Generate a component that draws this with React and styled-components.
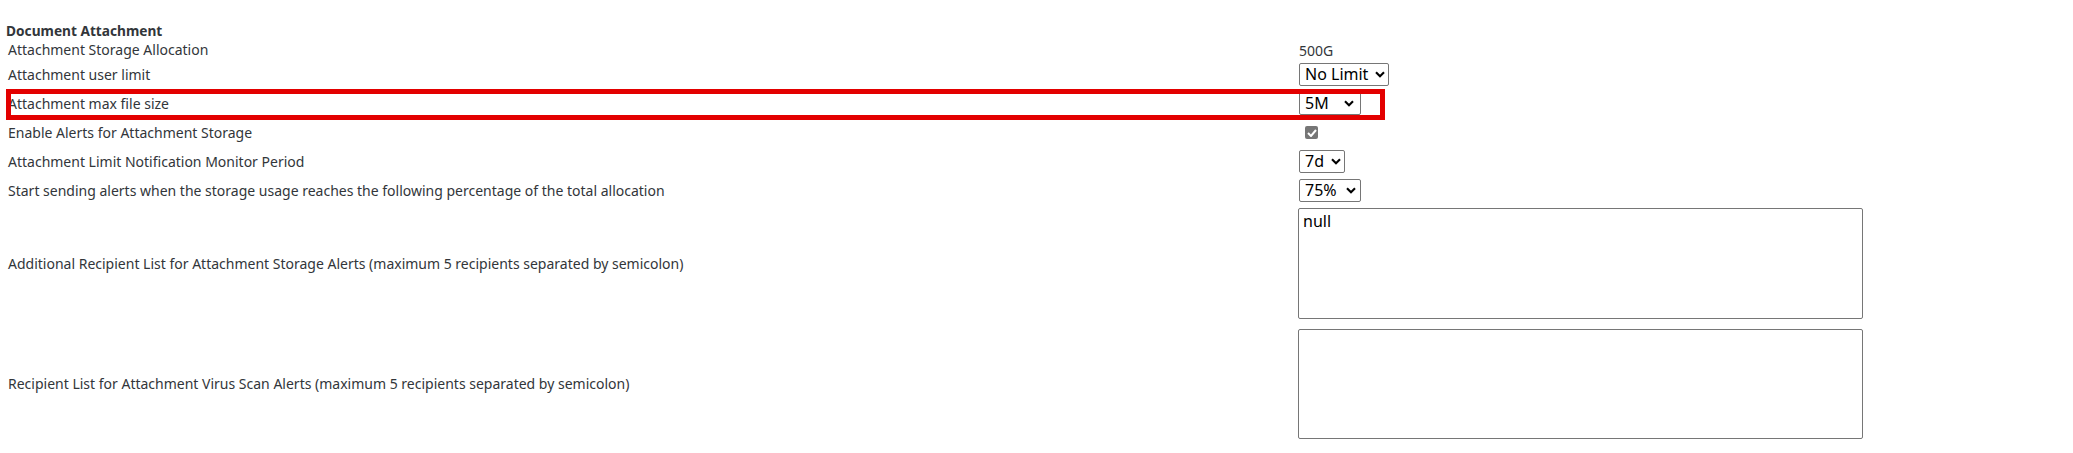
import React from 'react';
import styled, { createGlobalStyle } from 'styled-components';

const GlobalStyle = createGlobalStyle`
  html, body {
    margin: 0;
    padding: 0;
    background: #ffffff;
  }
  body {
    font-family: "Noto Sans", "Liberation Sans", sans-serif;
    color: #32363a;
  }
`;

const Page = styled.div`
  padding: 22px 0 0 8px;
  width: 2073px;
  height: 453px;
  box-sizing: border-box;
`;

const Heading = styled.div`
  margin-left: -2px;
  font-size: 13.7px;
  font-weight: 700;
  line-height: 18px;
  height: 18px;
`;

const Grid = styled.div`
  display: grid;
  grid-template-columns: 1291px auto;
  align-items: center;
`;

const Label = styled.div`
  font-size: 14px;
  line-height: 20px;
  white-space: nowrap;
  margin-top: ${(p) => p.gap || 0}px;
`;

const Value = styled.div`
  position: relative;
  display: flex;
  align-items: center;
  height: ${(p) => p.h || 23}px;
  margin-top: ${(p) => p.gap || 0}px;
  font-size: 14px;
`;

const SelectBox = styled.div`
  display: flex;
  align-items: center;
  justify-content: space-between;
  box-sizing: border-box;
  width: ${(p) => p.w}px;
  height: 23px;
  padding: 0 ${(p) => p.pr || 4}px 0 5px;
  border: 1px solid #767676;
  border-radius: 2px;
  background: #ffffff;
  font-family: "Noto Sans", "Open Sans", sans-serif;
  font-size: 16px;
  color: #000000;
  line-height: 21px;
`;

const Chevron = () => (
  <svg width="10" height="7" viewBox="0 0 10 7">
    <polyline points="1,1.2 5,5.2 9,1.2" fill="none" stroke="#000" strokeWidth="2.1" />
  </svg>
);

const Select = ({ w, pr, children }) => (
  <SelectBox w={w} pr={pr}>
    <span>{children}</span>
    <Chevron />
  </SelectBox>
);

const CheckBox = styled.span`
  display: inline-flex;
  align-items: center;
  justify-content: center;
  width: 13px;
  height: 13px;
  margin-left: 6px;
  border-radius: 2px;
  background: #767676;
`;

const TextArea = styled.textarea`
  box-sizing: border-box;
  width: 565px;
  height: ${(p) => p.h || 111}px;
  margin: 0 0 0 -1px;
  padding: 3px 4px;
  border: 1px solid #767676;
  border-radius: 2px;
  resize: none;
  font-family: "Noto Sans", "Open Sans", sans-serif;
  font-size: 16px;
  line-height: 19px;
  color: #000000;
  outline: none;
`;

const Highlight = styled.div`
  position: absolute;
  top: -3px;
  left: -1293px;
  width: 1379px;
  height: 31px;
  box-sizing: border-box;
  border: 5px solid #e30000;
  pointer-events: none;
`;

export default function App() {
  return (
    <>
      <GlobalStyle />
      <Page>
        <Heading>Document Attachment</Heading>
        <Grid>
          <Label>Attachment Storage Allocation</Label>
          <Value h={20}>500G</Value>

          <Label gap={3}>Attachment user limit</Label>
          <Value gap={3}>
            <Select w={90} pr={3}>No Limit</Select>
          </Value>

          <Label gap={6}>Attachment max file size</Label>
          <Value gap={6}>
            <Select w={62} pr={6}>5M</Select>
            <Highlight />
          </Value>

          <Label gap={6}>Enable Alerts for Attachment Storage</Label>
          <Value gap={6}>
            <CheckBox>
              <svg width="10" height="8" viewBox="0 0 10 8">
                <polyline points="1,4 4,7 9,1" fill="none" stroke="#fff" strokeWidth="2" />
              </svg>
            </CheckBox>
          </Value>

          <Label gap={6}>Attachment Limit Notification Monitor Period</Label>
          <Value gap={6}>
            <Select w={46} pr={3}>7d</Select>
          </Value>

          <Label gap={6}>
            Start sending alerts when the storage usage reaches the following percentage of the total allocation
          </Label>
          <Value gap={6}>
            <Select w={62} pr={4}>75%</Select>
          </Value>

          <Label gap={6}>
            Additional Recipient List for Attachment Storage Alerts (maximum 5 recipients separated by semicolon)
          </Label>
          <Value gap={6} h={111}>
            <TextArea defaultValue="null" />
          </Value>

          <Label gap={10}>
            Recipient List for Attachment Virus Scan Alerts (maximum 5 recipients separated by semicolon)
          </Label>
          <Value gap={10} h={110}>
            <TextArea h={110} defaultValue="" />
          </Value>
        </Grid>
      </Page>
    </>
  );
}
